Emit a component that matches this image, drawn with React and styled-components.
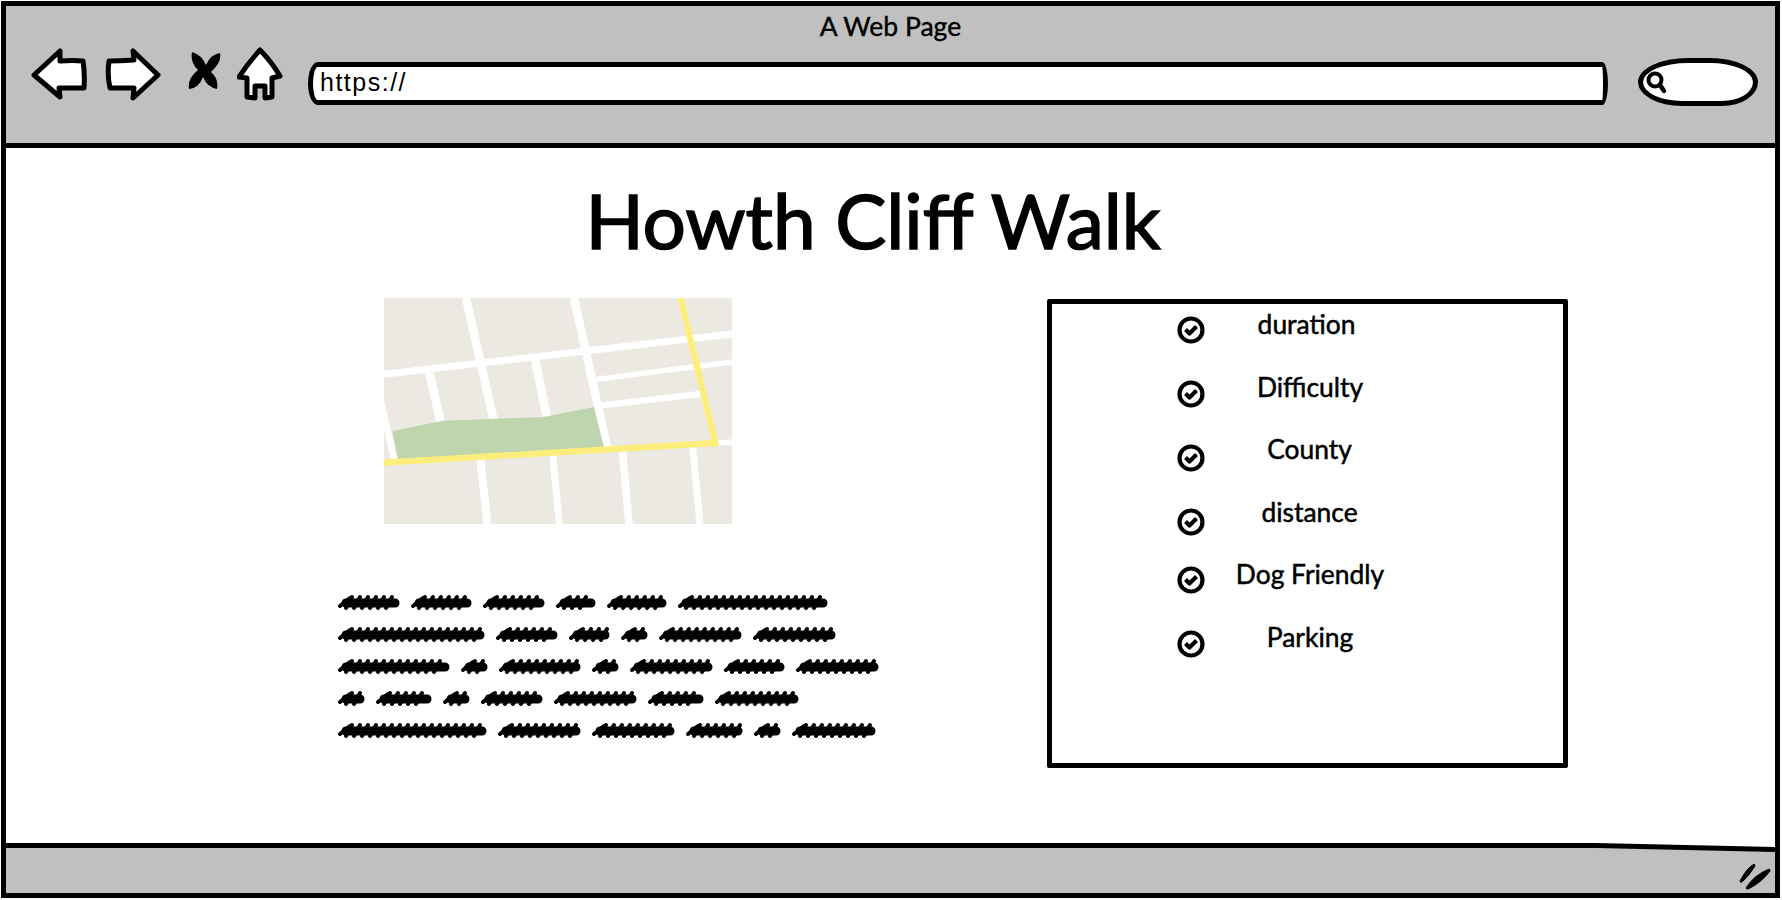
import React from 'react'
import styled, { createGlobalStyle } from 'styled-components'

const GlobalStyle = createGlobalStyle`
   html, body {
      margin: 0;
      padding: 0;
      background: #fff;
   }
`;

const FONT = `Lato, "Noto Sans", sans-serif`;

const paragraph = [
   [63, 62, 63, 41, 61, 151],
   [148, 63, 42, 28, 84, 84],
   [113, 28, 83, 28, 84, 62, 84],
   [28, 57, 28, 63, 84, 57, 85],
   [150, 84, 84, 58, 28, 85],
];

const facts = [
   { label: 'duration', nudge: 7 },
   { label: 'Difficulty', nudge: 0 },
   { label: 'County', nudge: 1 },
   { label: 'distance', nudge: 1 },
   { label: 'Dog Friendly', nudge: 0 },
   { label: 'Parking', nudge: 0 },
];

// one scribbled word, slanted strokes laid over a thick base line
const ScribbleWord = ({ width }) => {
   let d = `M3 13 L13 5`;
   for (let x = 9; x < width - 8; x += 8) {
      d += ` M${x} 15 L${x + 6} 4`;
   }
   return (
      <svg width={width} height={19} viewBox={`0 0 ${width} 19`}>
         <path d={d} fill="none" stroke="#000" strokeWidth="4" strokeLinecap="round" />
         <path d={`M9 10 L${width - 5} 10`} fill="none" stroke="#000" strokeWidth="9" strokeLinecap="round" />
      </svg>
   );
};

const BackIcon = () => (
   <svg width="56" height="52" viewBox="0 0 56 52">
      <path d="M3 27 L29 3 L29 13 Q42 12 52 13 Q54 26 53 40 L28 40 L29 49 Z" fill="#fff" stroke="#000" strokeWidth="5" strokeLinejoin="round" />
   </svg>
);

const ForwardIcon = () => (
   <svg width="56" height="54" viewBox="0 0 56 54">
      <path d="M53 28 L28 4 L29 13 Q15 14 4 14 Q2 28 5 41 L29 41 L28 51 Z" fill="#fff" stroke="#000" strokeWidth="5" strokeLinejoin="round" />
   </svg>
);

const StopIcon = () => (
   <svg width="34" height="38" viewBox="0 0 34 38">
      <path d="M4 0 Q14 3 18 13 Q23 2 32 1 Q34 10 23 20 Q31 27 29 37 Q19 35 15 25 Q11 36 1 37 Q-1 27 10 18 Q2 10 4 0 Z" fill="#000" />
   </svg>
);

const HomeIcon = () => (
   <svg width="46" height="54" viewBox="0 0 46 54">
      <path d="M23 3 Q34 14 43 29 L35 31 L35 50 L28 51 L28 39 L18 39 L18 51 L10 50 L10 31 L2 30 Q12 15 23 3 Z" fill="#fff" stroke="#000" strokeWidth="5" strokeLinejoin="round" />
   </svg>
);

const SearchIcon = () => (
   <svg width="26" height="26" viewBox="0 0 26 26">
      <circle cx="11" cy="11" r="6.5" fill="none" stroke="#000" strokeWidth="4" />
      <path d="M16 16 L20 22" stroke="#000" strokeWidth="4.5" strokeLinecap="round" />
   </svg>
);

const CheckIcon = () => (
   <svg width="28" height="28" viewBox="0 0 28 28">
      <circle cx="14" cy="14" r="11.5" fill="none" stroke="#000" strokeWidth="4.2" />
      <path d="M8.5 13.5 L12.5 17.5 L19.5 10.5" fill="none" stroke="#000" strokeWidth="4.2" strokeLinejoin="round" />
   </svg>
);

const Grip = () => (
   <svg width="34" height="28" viewBox="0 0 34 28">
      <path d="M2 19 Q8 7 16 2 Q17 3 17 4 Q11 14 4 20 Q2 21 2 19 Z" fill="#000" stroke="#000" strokeWidth="1" />
      <path d="M8 26 Q16 13 31 7 Q33 8 32 9 Q23 21 10 27 Q8 27 8 26 Z" fill="#000" stroke="#000" strokeWidth="1" />
   </svg>
);

const RouteMap = () => (
   <svg width="348" height="226" viewBox="42 38 1044 678">
      <rect x="42" y="38" width="1044" height="678" fill="#ebe9e2" />
      <g fill="none" stroke="#fff">
         <path d="M42 267 L1086 146" strokeWidth="21" />
         <path d="M288 38 L372 410" strokeWidth="25" />
         <path d="M612 38 L712 490" strokeWidth="25" />
         <path d="M178 262 L212 410" strokeWidth="26" />
         <path d="M495 222 L532 400" strokeWidth="26" />
         <path d="M28 330 L74 530" strokeWidth="20" />
         <path d="M680 282 L1086 230" strokeWidth="16" />
         <path d="M695 360 L1000 325" strokeWidth="19" />
         <path d="M1040 473 L1086 470" strokeWidth="17" />
         <path d="M330 515 L352 716" strokeWidth="24" />
         <path d="M548 505 L568 716" strokeWidth="21" />
         <path d="M757 495 L777 716" strokeWidth="23" />
         <path d="M968 485 L990 716" strokeWidth="21" />
      </g>
      <path d="M68 437 L218 406 L520 395 L672 365 L702 487 L84 525 Z" fill="#bfd5ae" />
      <path d="M42 532 L1036 473 L932 38" fill="none" stroke="#fbee7d" strokeWidth="19" />
   </svg>
);

const App = () => {
   return (
      <Page>
         <GlobalStyle />
         <Window>
            <Toolbar>
               <PageName>A Web Page</PageName>
               <NavRow>
                  <NavIcon $top={1} $gap={18}><BackIcon /></NavIcon>
                  <NavIcon $top={0} $gap={27}><ForwardIcon /></NavIcon>
                  <NavIcon $top={5} $gap={15}><StopIcon /></NavIcon>
                  <NavIcon $top={0} $gap={25}><HomeIcon /></NavIcon>
                  <UrlBar>https://</UrlBar>
                  <SearchField><SearchIcon /></SearchField>
               </NavRow>
            </Toolbar>
            <Content>
               <Title>Howth Cliff Walk</Title>
               <Columns>
                  <LeftColumn>
                     <MapHolder><RouteMap /></MapHolder>
                     <Paragraph>
                        {
                           paragraph.map((line, i) => {
                              return (
                                 <ScribbleLine key={i}>
                                    {line.map((w, j) => <ScribbleWord key={j} width={w} />)}
                                 </ScribbleLine>
                              )
                           })
                        }
                     </Paragraph>
                  </LeftColumn>
                  <FactsBox>
                     <Checks>
                        {facts.map((f, i) => <Check key={i} $tight={i === 4}><CheckIcon /></Check>)}
                     </Checks>
                     <Labels>
                        {facts.map((f, i) => <Label key={i} $nudge={f.nudge}>{f.label}</Label>)}
                     </Labels>
                  </FactsBox>
               </Columns>
            </Content>
            <StatusBar>
               <StatusFill>
                  <Grip />
               </StatusFill>
            </StatusBar>
         </Window>
      </Page>
   )
}

const Page = styled.div`
   width: 1782px;
   height: 900px;
   padding: 1px 2px 2px 1px;
   box-sizing: border-box;
   overflow: hidden;
`;

const Window = styled.div`
   height: 100%;
   box-sizing: border-box;
   border: 5px solid #000;
   background: #fff;
   display: flex;
   flex-direction: column;
`;

const Toolbar = styled.header`
   height: 142px;
   box-sizing: border-box;
   flex: none;
   background: #c0c0c0;
   border-bottom: 5px solid #000;
`;

const PageName = styled.div`
   height: 41px;
   line-height: 41px;
   text-align: center;
   font-family: ${FONT};
   font-size: 26.5px;
   -webkit-text-stroke: 0.4px #000;
   color: #000;
`;

const NavRow = styled.div`
   display: flex;
   align-items: flex-start;
   padding-left: 25px;
`;

const NavIcon = styled.div`
   margin-top: ${props => props.$top}px;
   margin-right: ${props => props.$gap}px;
   display: flex;
`;

const UrlBar = styled.div`
   width: 1300px;
   height: 43px;
   margin-top: 15px;
   margin-right: 30px;
   box-sizing: border-box;
   padding-left: 7px;
   background: #fff;
   border: 5px solid #000;
   border-radius: 10px 6px 6px 10px / 22px;
   font-family: "Liberation Sans", Arial, sans-serif;
   font-size: 25px;
   letter-spacing: 1.5px;
   line-height: 30px;
   color: #000;
`;

const SearchField = styled.div`
   width: 120px;
   height: 48px;
   margin-top: 11px;
   box-sizing: border-box;
   background: #fff;
   border: 5px solid #000;
   border-radius: 50px 48px 36px 44px / 24px;
   display: flex;
   align-items: center;
   padding-left: 1px;
`;

const Content = styled.main`
   flex: 1;
   min-height: 0;
`;

const Title = styled.h1`
   margin: 23px 0 0;
   padding-right: 35px;
   height: 100px;
   line-height: 96px;
   text-align: center;
   font-family: ${FONT};
   font-weight: 400;
   font-size: 76.5px;
   -webkit-text-stroke: 1.6px #000;
   color: #000;
`;

const Columns = styled.div`
   display: flex;
   align-items: flex-start;
   margin-top: 27px;
   padding-left: 331px;
`;

const LeftColumn = styled.div`
   width: 543px;
   margin-right: 167px;
`;

const MapHolder = styled.div`
   display: flex;
   margin-left: 47px;
`;

const Paragraph = styled.div`
   margin-top: 62px;
   display: flex;
   flex-direction: column;
`;

const ScribbleLine = styled.div`
   height: 32px;
   display: flex;
   align-items: center;
   gap: 10px;
`;

const FactsBox = styled.section`
   width: 521px;
   height: 469px;
   box-sizing: border-box;
   margin-top: 1px;
   border: 5px solid #000;
   border-radius: 2px;
   display: flex;
   padding-left: 125px;
`;

const Checks = styled.div`
   width: 28px;
   padding-top: 12px;
   display: flex;
   flex-direction: column;
`;

const Check = styled.div`
   height: 28px;
   display: flex;
   margin-top: ${props => props.$tight ? 30 : 36}px;
   &:first-child {
      margin-top: 0;
   }
`;

const Labels = styled.div`
   width: 156px;
   margin-left: 27px;
   display: flex;
   flex-direction: column;
   gap: 22.5px;
`;

const Label = styled.div`
   height: 40px;
   line-height: 40px;
   text-align: center;
   white-space: nowrap;
   padding-right: ${props => props.$nudge}px;
   font-family: ${FONT};
   font-size: 26.4px;
   -webkit-text-stroke: 0.5px #000;
   color: #000;
`;

const StatusBar = styled.footer`
   height: 50px;
   flex: none;
   display: flex;
   background: #000;
   clip-path: polygon(0 0, 1590px 0, 100% 4px, 100% 100%, 0 100%);
`;

const StatusFill = styled.div`
   flex: 1;
   margin-top: 5px;
   background: #c0c0c0;
   clip-path: polygon(0 0, 1590px 0, 100% 4px, 100% 100%, 0 100%);
   display: flex;
   justify-content: flex-end;
   align-items: flex-start;
   padding: 14px 3px 0 0;
`;

export default App
